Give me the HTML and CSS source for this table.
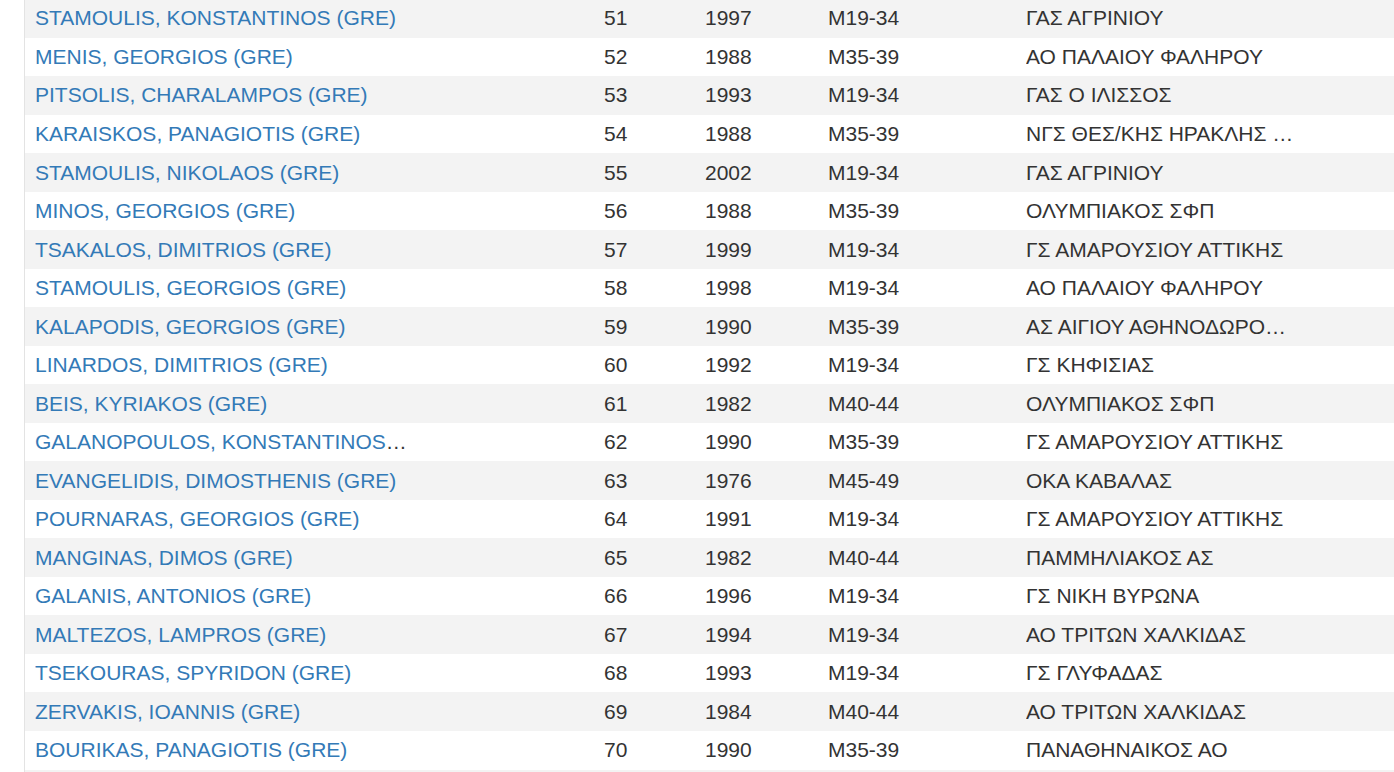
FILE: index.html
```html
<!DOCTYPE html>
<html lang="el">
<head>
<meta charset="utf-8">
<title>Results</title>
<link rel="stylesheet" href="styles.css">
</head>
<body>
<div class="page">
<table class="results">
<colgroup>
<col class="c-name"><col class="c-num"><col class="c-year"><col class="c-cat"><col class="c-club">
</colgroup>
<tbody>
<tr><td><div class="clip name"><a href="#">STAMOULIS, KONSTANTINOS (GRE)</a></div></td><td>51</td><td>1997</td><td>M19-34</td><td><div class="clip club">ΓΑΣ ΑΓΡΙΝΙΟΥ</div></td></tr>
<tr><td><div class="clip name"><a href="#">MENIS, GEORGIOS (GRE)</a></div></td><td>52</td><td>1988</td><td>M35-39</td><td><div class="clip club">ΑΟ ΠΑΛΑΙΟΥ ΦΑΛΗΡΟΥ</div></td></tr>
<tr><td><div class="clip name"><a href="#">PITSOLIS, CHARALAMPOS (GRE)</a></div></td><td>53</td><td>1993</td><td>M19-34</td><td><div class="clip club">ΓΑΣ Ο ΙΛΙΣΣΟΣ</div></td></tr>
<tr><td><div class="clip name"><a href="#">KARAISKOS, PANAGIOTIS (GRE)</a></div></td><td>54</td><td>1988</td><td>M35-39</td><td><div class="clip club">ΝΓΣ ΘΕΣ/ΚΗΣ ΗΡΑΚΛΗΣ 1908</div></td></tr>
<tr><td><div class="clip name"><a href="#">STAMOULIS, NIKOLAOS (GRE)</a></div></td><td>55</td><td>2002</td><td>M19-34</td><td><div class="clip club">ΓΑΣ ΑΓΡΙΝΙΟΥ</div></td></tr>
<tr><td><div class="clip name"><a href="#">MINOS, GEORGIOS (GRE)</a></div></td><td>56</td><td>1988</td><td>M35-39</td><td><div class="clip club">ΟΛΥΜΠΙΑΚΟΣ ΣΦΠ</div></td></tr>
<tr><td><div class="clip name"><a href="#">TSAKALOS, DIMITRIOS (GRE)</a></div></td><td>57</td><td>1999</td><td>M19-34</td><td><div class="clip club">ΓΣ ΑΜΑΡΟΥΣΙΟΥ ΑΤΤΙΚΗΣ</div></td></tr>
<tr><td><div class="clip name"><a href="#">STAMOULIS, GEORGIOS (GRE)</a></div></td><td>58</td><td>1998</td><td>M19-34</td><td><div class="clip club">ΑΟ ΠΑΛΑΙΟΥ ΦΑΛΗΡΟΥ</div></td></tr>
<tr><td><div class="clip name"><a href="#">KALAPODIS, GEORGIOS (GRE)</a></div></td><td>59</td><td>1990</td><td>M35-39</td><td><div class="clip club">ΑΣ ΑΙΓΙΟΥ ΑΘΗΝΟΔΩΡΟΣ ΑΙΓΙΟΥ</div></td></tr>
<tr><td><div class="clip name"><a href="#">LINARDOS, DIMITRIOS (GRE)</a></div></td><td>60</td><td>1992</td><td>M19-34</td><td><div class="clip club">ΓΣ ΚΗΦΙΣΙΑΣ</div></td></tr>
<tr><td><div class="clip name"><a href="#">BEIS, KYRIAKOS (GRE)</a></div></td><td>61</td><td>1982</td><td>M40-44</td><td><div class="clip club">ΟΛΥΜΠΙΑΚΟΣ ΣΦΠ</div></td></tr>
<tr><td><div class="clip name"><a href="#">GALANOPOULOS, KONSTANTINOS (GRE)</a></div></td><td>62</td><td>1990</td><td>M35-39</td><td><div class="clip club">ΓΣ ΑΜΑΡΟΥΣΙΟΥ ΑΤΤΙΚΗΣ</div></td></tr>
<tr><td><div class="clip name"><a href="#">EVANGELIDIS, DIMOSTHENIS (GRE)</a></div></td><td>63</td><td>1976</td><td>M45-49</td><td><div class="clip club">ΟΚΑ ΚΑΒΑΛΑΣ</div></td></tr>
<tr><td><div class="clip name"><a href="#">POURNARAS, GEORGIOS (GRE)</a></div></td><td>64</td><td>1991</td><td>M19-34</td><td><div class="clip club">ΓΣ ΑΜΑΡΟΥΣΙΟΥ ΑΤΤΙΚΗΣ</div></td></tr>
<tr><td><div class="clip name"><a href="#">MANGINAS, DIMOS (GRE)</a></div></td><td>65</td><td>1982</td><td>M40-44</td><td><div class="clip club">ΠΑΜΜΗΛΙΑΚΟΣ ΑΣ</div></td></tr>
<tr><td><div class="clip name"><a href="#">GALANIS, ANTONIOS (GRE)</a></div></td><td>66</td><td>1996</td><td>M19-34</td><td><div class="clip club">ΓΣ ΝΙΚΗ ΒΥΡΩΝΑ</div></td></tr>
<tr><td><div class="clip name"><a href="#">MALTEZOS, LAMPROS (GRE)</a></div></td><td>67</td><td>1994</td><td>M19-34</td><td><div class="clip club">ΑΟ ΤΡΙΤΩΝ ΧΑΛΚΙΔΑΣ</div></td></tr>
<tr><td><div class="clip name"><a href="#">TSEKOURAS, SPYRIDON (GRE)</a></div></td><td>68</td><td>1993</td><td>M19-34</td><td><div class="clip club">ΓΣ ΓΛΥΦΑΔΑΣ</div></td></tr>
<tr><td><div class="clip name"><a href="#">ZERVAKIS, IOANNIS (GRE)</a></div></td><td>69</td><td>1984</td><td>M40-44</td><td><div class="clip club">ΑΟ ΤΡΙΤΩΝ ΧΑΛΚΙΔΑΣ</div></td></tr>
<tr><td><div class="clip name"><a href="#">BOURIKAS, PANAGIOTIS (GRE)</a></div></td><td>70</td><td>1990</td><td>M35-39</td><td><div class="clip club">ΠΑΝΑΘΗΝΑΙΚΟΣ ΑΟ</div></td></tr>
<tr><td><div class="clip name"><a href="#">&nbsp;</a></div></td><td></td><td></td><td></td><td></td></tr>
</tbody>
</table>
</div>
</body>
</html>
```

FILE: styles.css
```css
html, body {
  margin: 0;
  padding: 0;
  height: 772px;
  overflow: hidden;
  background: #ffffff;
}

body {
  font-family: "Liberation Sans", Arial, sans-serif;
  font-size: 21px;
  color: #333333;
}

.page {
  padding-left: 24px;
}

.results {
  width: 1370px;
  margin-top: -0.8px;
  border-collapse: separate;
  border-spacing: 0;
  table-layout: fixed;
  border-left: 1px solid #e3e3e3;
}

.c-name { width: 569px; }
.c-num { width: 101px; }
.c-year { width: 123px; }
.c-cat { width: 198px; }

.results td {
  height: 38.53px;
  padding: 0 0 0 10px;
  vertical-align: middle;
  white-space: nowrap;
  line-height: 24px;
  box-sizing: border-box;
}

.results tr:nth-child(odd) td {
  background: #f3f3f3;
}

.clip {
  overflow: hidden;
  text-overflow: ellipsis;
  white-space: nowrap;
}

.name { max-width: 376px; }
.club { max-width: 271px; }

.results a {
  color: #337ab7;
  text-decoration: none;
}
```
